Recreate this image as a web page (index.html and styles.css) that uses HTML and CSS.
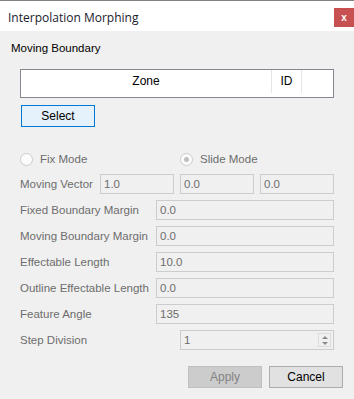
FILE: index.html
```html
<!DOCTYPE html>
<html>
<head>
<meta charset="utf-8">
<link rel="stylesheet" href="styles.css">
</head>
<body>
<div class="window">
  <div class="titlebar">
    <span class="title">Interpolation Morphing</span>
    <span class="close">x</span>
  </div>
  <div class="content">
    <div class="section">Moving Boundary</div>
    <div class="table">
      <div class="col zone">Zone</div>
      <div class="col id">ID</div>
      <div class="col rest"></div>
    </div>
    <button class="btn select">Select</button>
    <div class="radios">
      <label class="radio r1"><span class="circle"></span>Fix Mode</label>
      <label class="radio r2"><span class="circle checked"></span>Slide Mode</label>
    </div>
    <div class="row">
      <span class="label short">Moving Vector</span>
      <div class="inputs">
        <span class="input v">1.0</span>
        <span class="input v">0.0</span>
        <span class="input v">0.0</span>
      </div>
    </div>
    <div class="row"><span class="label">Fixed Boundary Margin</span><span class="input wide">0.0</span></div>
    <div class="row"><span class="label">Moving Boundary Margin</span><span class="input wide">0.0</span></div>
    <div class="row"><span class="label">Effectable Length</span><span class="input wide">10.0</span></div>
    <div class="row"><span class="label">Outline Effectable Length</span><span class="input wide">0.0</span></div>
    <div class="row"><span class="label">Feature Angle</span><span class="input wide">135</span></div>
    <div class="row"><span class="label long">Step Division</span>
      <span class="input spin">1
        <span class="arrows"><span class="up"></span><span class="down"></span></span>
      </span>
    </div>
    <div class="buttons">
      <button class="btn apply">Apply</button>
      <button class="btn cancel">Cancel</button>
    </div>
  </div>
</div>
</body>
</html>
```
FILE: styles.css
```css
html, body {
  margin: 0;
  padding: 0;
}
body {
  font-family: "Liberation Sans", Arial, sans-serif;
  font-size: 11.5px;
  color: #000;
  background: #f0f0f0;
}
.window {
  width: 354px;
  height: 399px;
  background: #f0f0f0;
  overflow: hidden;
}
.titlebar {
  height: 30px;
  border-top: 1px solid #808080;
  background: #fff;
  display: flex;
  justify-content: space-between;
  align-items: flex-start;
}
.title {
  margin: 8px 0 0 8px;
  font-family: "Open Sans", "Liberation Sans", sans-serif;
  font-size: 12px;
  color: #1a1a2e;
}
.close {
  margin-top: 7px;
  width: 20px;
  height: 19px;
  background: #c75050;
  color: #fff;
  font-weight: bold;
  font-size: 10px;
  display: flex;
  align-items: center;
  justify-content: center;
  line-height: 1;
}
.content {
  padding: 0 0 0 20px;
}
.section {
  margin: 9px 0 0 -9px;
  height: 16px;
  line-height: 16px;
}
.table {
  margin-top: 13px;
  width: 312px;
  height: 27px;
  border: 1px solid #828790;
  background: #fff;
  display: flex;
}
.col {
  height: 23px;
  line-height: 23px;
  text-align: center;
  box-sizing: border-box;
  font-size: 12px;
}
.zone {
  width: 251px;
  border-right: 1px solid #e5e5e5;
}
.id {
  width: 30px;
  border-right: 1px solid #e5e5e5;
}
.rest {
  flex: 1;
}
.btn {
  font-family: inherit;
  font-size: 12px;
  box-sizing: border-box;
  padding: 0;
  height: 22px;
  width: 74px;
  border: 1px solid #adadad;
  background: #e1e1e1;
  color: #000;
}
.select {
  display: block;
  margin: 7px 0 0 1px;
  width: 74px;
  border-color: #0078d7;
  background: #e5f1fb;
}
.radios {
  display: flex;
  margin-top: 25px;
  height: 14px;
  color: #6d6d6d;
}
.radio {
  display: flex;
  align-items: center;
  gap: 7px;
}
.r1 {
  width: 160px;
}
.circle {
  width: 11px;
  height: 11px;
  border: 1px solid #cccccc;
  border-radius: 50%;
  background: #fcfcfc;
  position: relative;
}
.circle.checked::after {
  content: "";
  position: absolute;
  left: 3px;
  top: 3px;
  width: 5px;
  height: 5px;
  border-radius: 50%;
  background: #bfbfbf;
}
.row {
  display: flex;
  align-items: center;
  height: 20px;
  margin-top: 6px;
  color: #6d6d6d;
}
.radios + .row {
  margin-top: 8px;
}
.label {
  width: 136px;
  white-space: nowrap;
}
.label.short {
  width: 80px;
}
.label.long {
  width: 160px;
}
.inputs {
  display: flex;
  gap: 6px;
}
.input {
  box-sizing: border-box;
  height: 20px;
  border: 1px solid #cccccc;
  background: #f0f0f0;
  padding-left: 3px;
  line-height: 18px;
  color: #6d6d6d;
  position: relative;
}
.input.v {
  width: 74px;
}
.input.wide {
  width: 178px;
}
.input.spin {
  width: 154px;
}
.arrows {
  position: absolute;
  right: 2px;
  top: 2px;
  width: 13px;
  height: 14px;
  border: 1px solid #dcdcdc;
  box-sizing: border-box;
  display: flex;
  flex-direction: column;
  align-items: center;
  justify-content: space-around;
}
.up, .down {
  width: 0;
  height: 0;
  border-left: 3px solid transparent;
  border-right: 3px solid transparent;
}
.up {
  border-bottom: 3px solid #8a8a8a;
}
.down {
  border-top: 3px solid #8a8a8a;
}
.buttons {
  display: flex;
  gap: 7px;
  margin: 16px 0 0 168px;
}
.apply {
  background: #cccccc;
  border-color: #bfbfbf;
  color: #838383;
}
```
